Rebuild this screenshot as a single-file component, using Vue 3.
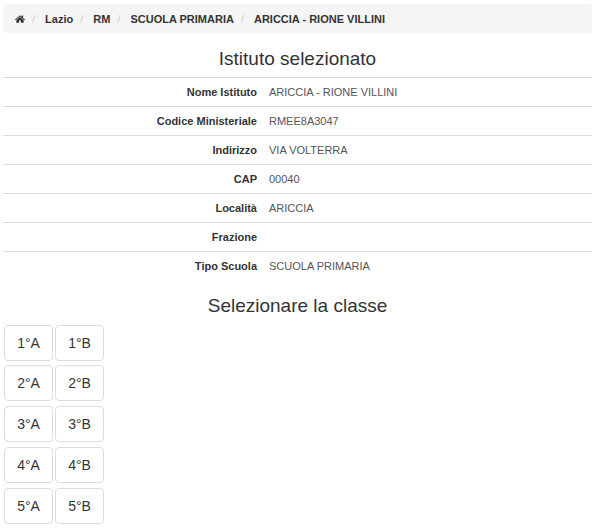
<template>
  <div class="page">
    <ol class="breadcrumb">
      <li v-for="(item, i) in crumbs" :key="i" class="crumb">
        <span v-if="i > 0" class="sep">/</span>
        <svg v-if="item === 'home'" class="home" viewBox="0 0 26 20" width="10" height="8">
          <path d="M13 0 L17.5 3.9 V1 H21 V6.9 L26 11.2 L24.5 13 L13 3.2 L1.5 13 L0 11.2 Z" fill="#333" />
          <path d="M13 5 L22.5 13 V20 H15.5 V14 H10.5 V20 H3.5 V13 Z" fill="#333" />
        </svg>
        <span v-else>{{ item }}</span>
      </li>
    </ol>

    <h3 class="title">Istituto selezionato</h3>

    <table class="info">
      <tbody>
        <tr v-for="row in rows" :key="row[0]">
          <th>{{ row[0] }}</th>
          <td>{{ row[1] }}</td>
        </tr>
      </tbody>
    </table>

    <h3 class="title classes-title">Selezionare la classe</h3>

    <div class="classes">
      <div v-for="n in 5" :key="n" class="class-row">
        <button class="class-btn">{{ n }}°A</button>
        <button class="class-btn">{{ n }}°B</button>
      </div>
    </div>
  </div>
</template>

<script setup>
const crumbs = ["home", "Lazio", "RM", "SCUOLA PRIMARIA", "ARICCIA - RIONE VILLINI"];

const rows = [
  ["Nome Istituto", "ARICCIA - RIONE VILLINI"],
  ["Codice Ministeriale", "RMEE8A3047"],
  ["Indirizzo", "VIA VOLTERRA"],
  ["CAP", "00040"],
  ["Località", "ARICCIA"],
  ["Frazione", ""],
  ["Tipo Scuola", "SCUOLA PRIMARIA"],
];
</script>

<style>
html,
body {
  margin: 0;
  background: #fff;
}
</style>

<style scoped>
.page {
  height: 528px;
  overflow: hidden;
  padding: 4px 8px 0 3px;
  box-sizing: border-box;
  font-family: "Liberation Sans", Arial, sans-serif;
  color: #333;
}

.breadcrumb {
  display: flex;
  align-items: center;
  height: 29px;
  margin: 0;
  padding: 0 12px;
  list-style: none;
  background: #f5f5f5;
  border-radius: 4px;
  font-size: 11px;
  font-weight: bold;
}

.crumb {
  display: flex;
  align-items: center;
}

.sep {
  padding: 0 10px 0 7px;
  color: #ccc;
  font-weight: normal;
}

.home {
  display: block;
}

.title {
  margin: 0;
  height: 44px;
  line-height: 52px;
  text-align: center;
  font-size: 19px;
  font-weight: normal;
}

.info {
  width: 100%;
  border-collapse: collapse;
  font-size: 11px;
}

.info tr {
  height: 29px;
  border-top: 1px solid #ddd;
}

.info th {
  width: 254px;
  padding: 0 6px 1px 0;
  text-align: right;
  font-weight: bold;
}

.info td {
  padding: 0 6px 1px;
  color: #555;
}

.classes-title {
  line-height: 50px;
}

.classes {
  display: flex;
  flex-direction: column;
  gap: 4.75px;
  margin-left: 1px;
}

.class-row {
  display: flex;
  gap: 2px;
}

.class-btn {
  width: 49px;
  height: 36px;
  padding: 0;
  background: #fff;
  border: 1px solid #ddd;
  border-radius: 4px;
  font-family: inherit;
  font-size: 14px;
  color: #333;
}
</style>
